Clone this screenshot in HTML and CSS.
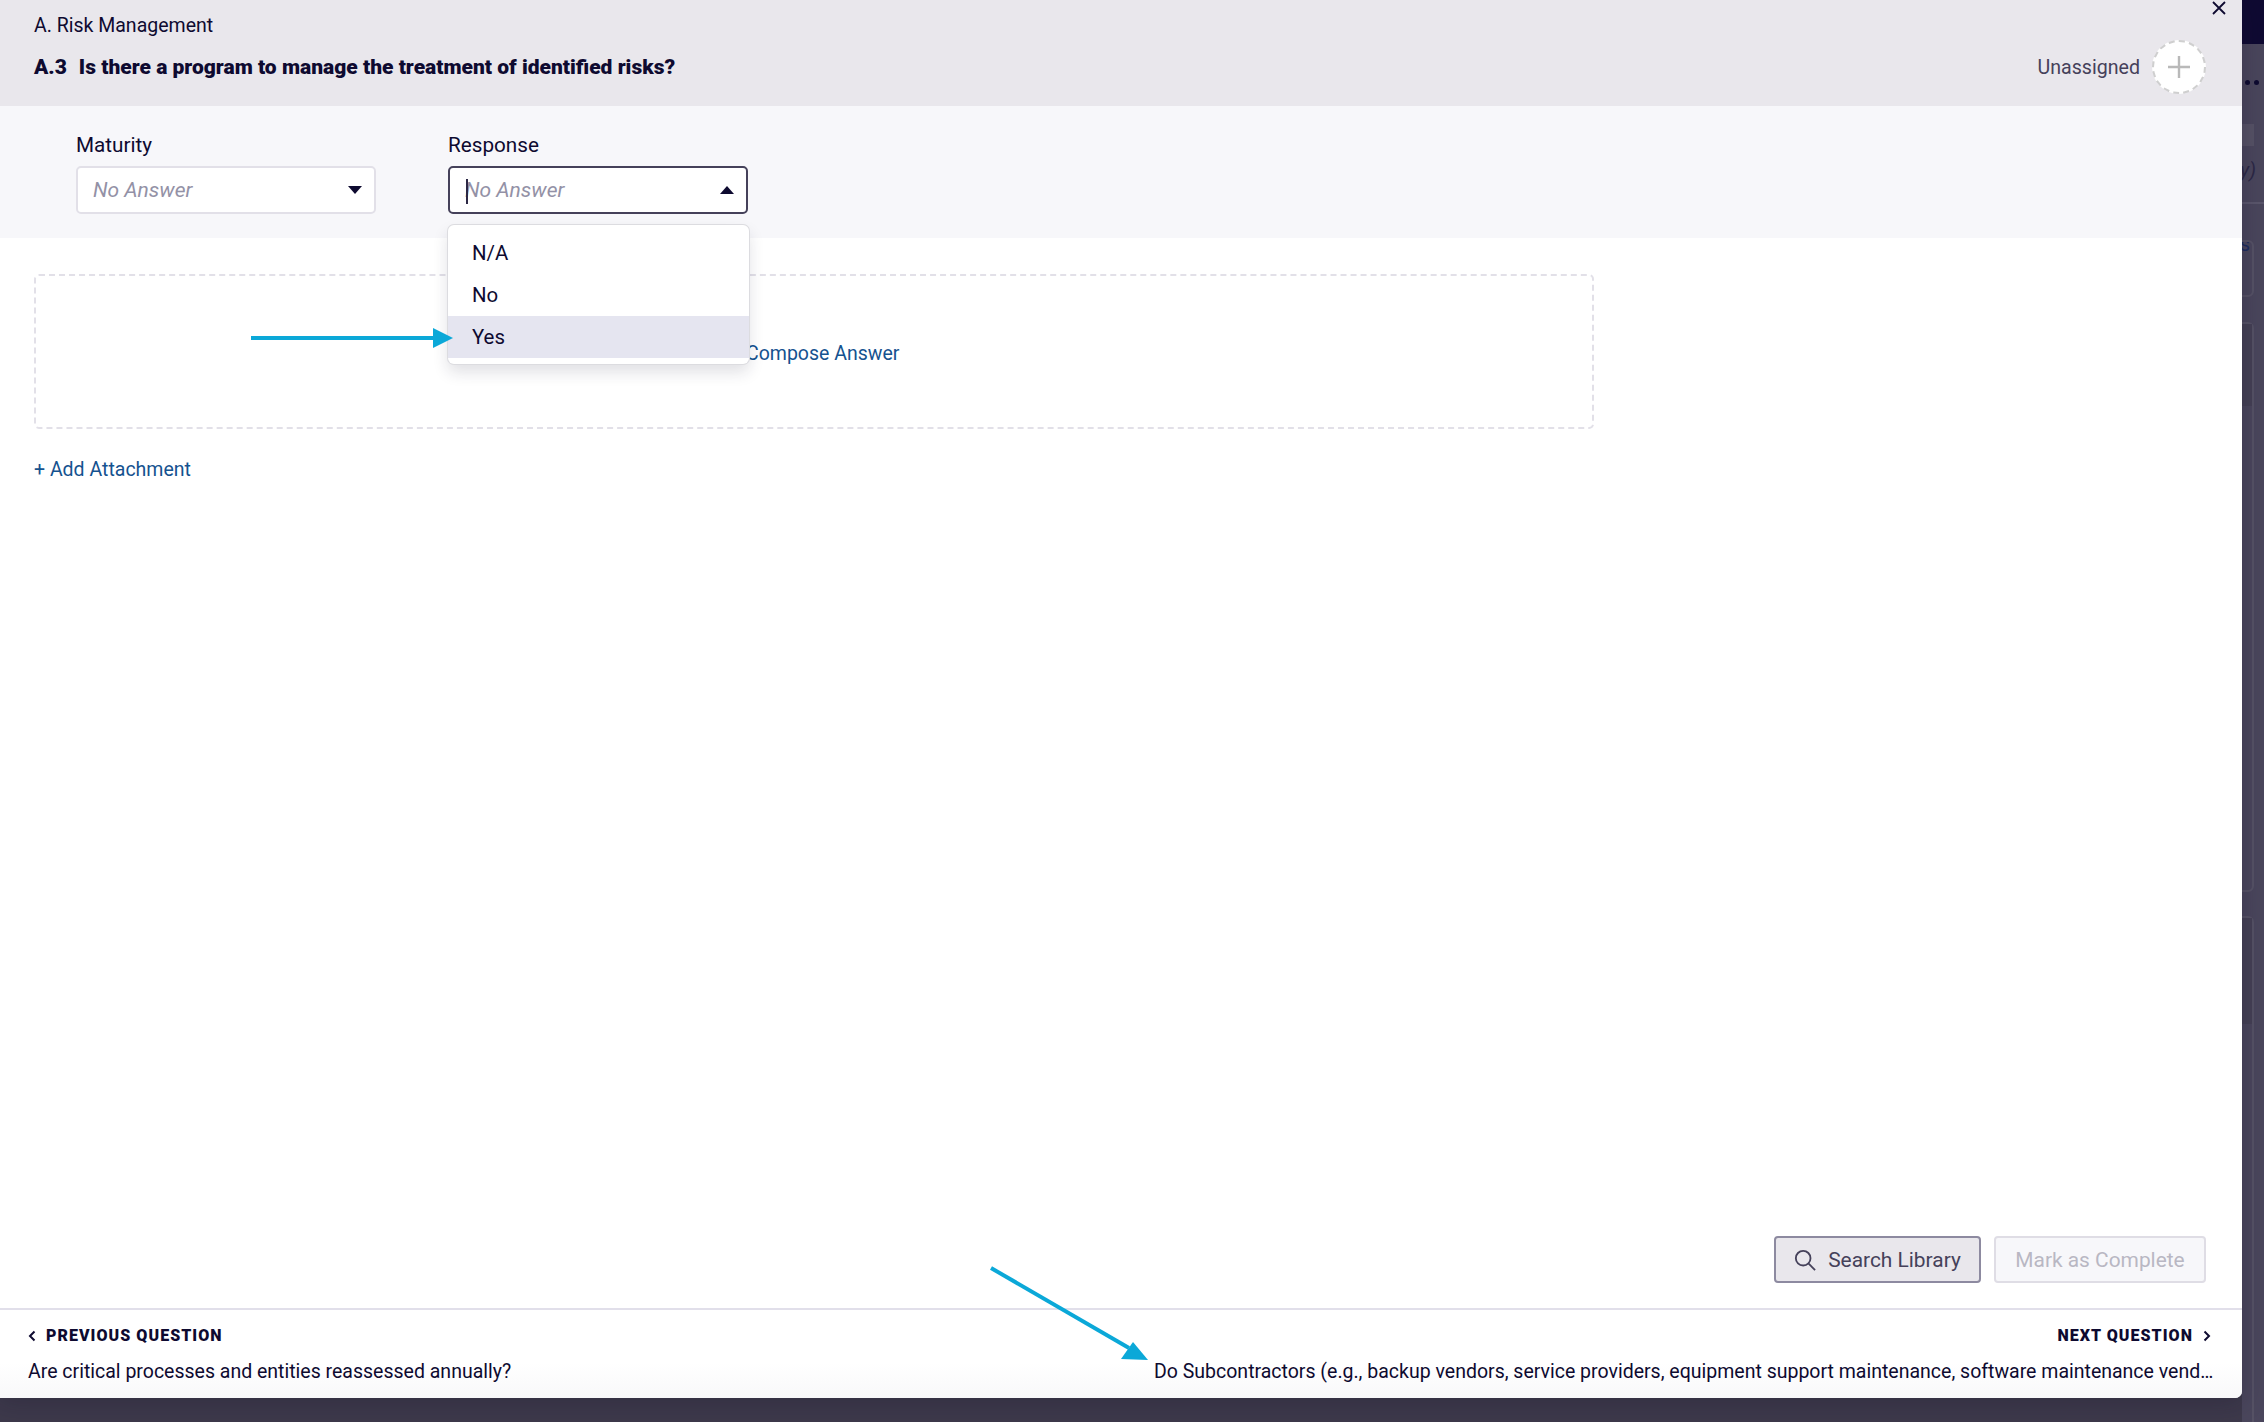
FILE: index.html
```html
<!DOCTYPE html>
<html lang="en">
<head>
<meta charset="utf-8">
<title>A.3 Risk Management</title>
<link rel="stylesheet" href="styles.css">
</head>
<body>
<div class="app">
  <main class="modal">
    <header class="head">
      <div class="head-main">
        <div class="section">A. Risk Management</div>
        <h1 class="question"><span class="qnum">A.3</span>Is there a program to manage the treatment of identified risks?</h1>
      </div>
      <div class="assign">
        <span class="assign-label">Unassigned</span>
        <span class="assign-btn">
          <svg class="assign-plus" viewBox="0 0 22 22"><path d="M11 0v22M0 11h22"/></svg>
        </span>
      </div>
      <svg class="close" viewBox="0 0 14 14"><path d="M1 1l12 12M13 1L1 13"/></svg>
    </header>

    <section class="fields">
      <div class="field">
        <label class="field-label">Maturity</label>
        <div class="select">
          <span class="placeholder">No Answer</span>
          <span class="tri tri-down"></span>
        </div>
      </div>
      <div class="field field-open">
        <label class="field-label">Response</label>
        <div class="select select-focus">
          <span class="caret"></span>
          <span class="placeholder">No Answer</span>
          <span class="tri tri-up"></span>
        </div>
        <ul class="menu">
          <li class="option">N/A</li>
          <li class="option">No</li>
          <li class="option option-active">Yes</li>
        </ul>
      </div>
    </section>

    <section class="body">
      <div class="drop">
        <a class="link compose">Compose Answer</a>
      </div>
      <a class="link attach">+ Add Attachment</a>
      <div class="actions">
        <button class="btn btn-search">
          <svg class="search-icon" viewBox="0 0 24 24"><circle cx="10" cy="10" r="8"/><path d="M16 16l7 7"/></svg>
          Search Library
        </button>
        <button class="btn btn-complete">Mark as Complete</button>
      </div>
    </section>

    <footer class="foot">
      <div class="nav">
        <div class="nav-title">
          <svg class="chev" viewBox="0 0 8 12"><path d="M6.5 1.5L2 6l4.5 4.5"/></svg>
          Previous Question
        </div>
        <div class="nav-text">Are critical processes and entities reassessed annually?</div>
      </div>
      <div class="nav nav-next">
        <div class="nav-title">
          Next Question
          <svg class="chev" viewBox="0 0 8 12"><path d="M1.5 1.5L6 6l-4.5 4.5"/></svg>
        </div>
        <div class="nav-text nav-clip">Do Subcontractors (e.g., backup vendors, service providers, equipment support maintenance, software maintenance vendors, or others) have access to systems?</div>
      </div>
    </footer>

    <svg class="annot annot-a" viewBox="0 0 204 22"><path class="annot-line" d="M0 11h185"/><path class="annot-head" d="M182 1l20 10-20 10z"/></svg>
    <svg class="annot annot-b" viewBox="0 0 160 95"><path class="annot-line" d="M1 1l138 80"/><path class="annot-head" d="M143 75l15 18-27-1z"/></svg>
  </main>

  <aside class="side">
    <div class="side-top"></div>
    <div class="side-dots"><i></i><i></i></div>
    <div class="side-chip"></div>
    <div class="side-paren">y)</div>
    <div class="side-rs">rs</div>
    <div class="side-card side-card-a"></div>
    <div class="side-card side-card-b"><div class="side-card-head"></div></div>
    <div class="side-card side-card-c"><div class="side-card-head"></div></div>
  </aside>
</div>
</body>
</html>
```
FILE: styles.css
```css
* { box-sizing: border-box; }
html, body { margin: 0; padding: 0; }
body {
  width: 2264px;
  height: 1422px;
  overflow: hidden;
  background: #3d394b;
  font-family: Roboto, "Liberation Sans", sans-serif;
  color: #0e0a30;
}
.app { display: flex; align-items: flex-start; width: 2264px; height: 1422px; }

.modal {
  position: relative;
  z-index: 2;
  display: flex;
  flex-direction: column;
  flex: 0 0 2242px;
  height: 1398px;
  background: #fff;
  border-bottom-right-radius: 7px;
  box-shadow: 0 4px 24px rgba(20, 16, 40, .25);
}

/* header */
.head {
  position: relative;
  display: flex;
  justify-content: space-between;
  flex: 0 0 106px;
  background: #e9e7ec;
  padding: 14px 36px 0 34px;
}
.section { font-size: 19.5px; line-height: 24px; }
.question {
  margin: 17px 0 0;
  font-size: 21px;
  line-height: 24px;
  font-weight: 900;
}
.qnum { display: inline-block; margin-right: 12px; }
.assign { display: flex; align-items: center; gap: 12px; height: 54px; margin-top: 26px; }
.assign-label { font-size: 19.6px; color: #45415a; }
.assign-btn {
  display: flex;
  align-items: center;
  justify-content: center;
  width: 54px;
  height: 54px;
  border-radius: 50%;
  background: #fff;
  border: 2px dashed #cfcfcf;
}
.assign-plus { width: 22px; height: 22px; fill: none; stroke: #b9b9b9; stroke-width: 2.4; }
.close {
  position: absolute;
  left: 2212px;
  top: 1px;
  width: 14px;
  height: 14px;
  fill: none;
  stroke: #0e0a30;
  stroke-width: 1.8;
}

/* fields */
.fields {
  display: flex;
  gap: 72px;
  flex: 0 0 132px;
  background: #f7f7fa;
  padding: 27px 0 0 76px;
}
.field { position: relative; width: 300px; }
.field-label { display: block; font-size: 20.7px; line-height: 24px; margin-bottom: 9px; }
.select {
  position: relative;
  display: flex;
  align-items: center;
  justify-content: space-between;
  height: 48px;
  padding: 0 12px 0 15px;
  background: #fff;
  border: 2px solid #e2e0e8;
  border-radius: 5px;
}
.select-focus { border-color: #45415a; }
.placeholder { font-size: 21px; font-style: italic; color: #9391a6; }
.tri { width: 0; height: 0; border-left: 7.5px solid transparent; border-right: 7.5px solid transparent; }
.tri-down { border-top: 8px solid #0e0a30; }
.tri-up { border-bottom: 8px solid #0e0a30; }
.caret {
  position: absolute;
  left: 16px;
  top: 11px;
  width: 2px;
  height: 25px;
  background: #2c2845;
}
.menu {
  position: absolute;
  z-index: 3;
  left: 0;
  top: 92px;
  width: 301px;
  margin: 0;
  padding: 7px 0 6px;
  list-style: none;
  background: #fff;
  border-radius: 6px;
  overflow: hidden;
  box-shadow: 0 0 0 1px #dcdce0, 0 8px 16px rgba(30, 26, 60, .14);
}
.option { height: 42px; line-height: 42px; padding-left: 24px; font-size: 20.4px; }
.option-active { background: #e5e5f0; }

/* body */
.body {
  flex: 1;
  display: flex;
  flex-direction: column;
  padding: 36px 36px 25px 34px;
}
.drop {
  position: relative;
  width: 1560px;
  height: 155px;
  border: 2px dashed #e2e0e8;
  border-radius: 5px;
  display: flex;
  align-items: center;
  padding-left: 710px;
}
.link { color: #15528f; font-size: 19.5px; }
.compose { position: relative; top: 2px; }
.attach { margin-top: 29px; line-height: 24px; }
.actions { margin-top: auto; display: flex; justify-content: flex-end; gap: 13px; }
.btn {
  display: flex;
  align-items: center;
  justify-content: center;
  height: 47px;
  border-radius: 4px;
  font-family: inherit;
  font-size: 20.9px;
  padding: 1px 0 0;
}
.btn-search {
  width: 207px;
  gap: 12px;
  background: #e9e7ec;
  border: 2px solid #8d8aa0;
  color: #45415a;
}
.search-icon { width: 22px; height: 22px; fill: none; stroke: #45415a; stroke-width: 2; }
.btn-complete {
  width: 212px;
  background: #f7f7fa;
  border: 2px solid #dfdde5;
  color: #b9b7c3;
}

/* footer */
.foot {
  display: flex;
  justify-content: space-between;
  flex: 0 0 90px;
  padding: 16px 31px 0 28px;
  border-top: 2px solid #e1dfea;
  background: linear-gradient(to bottom, #fff 60%, #f8f8fa 100%);
  border-bottom-right-radius: 7px;
}
.nav-title {
  display: flex;
  align-items: center;
  gap: 10px;
  font-size: 16px;
  line-height: 20px;
  font-weight: 900;
  letter-spacing: 1.05px;
  text-transform: uppercase;
}
.nav-text { margin-top: 14px; font-size: 19.5px; line-height: 24px; }
.nav-next { display: flex; flex-direction: column; align-items: flex-end; }
.nav-clip {
  width: 1060px;
  margin-right: -3px;
  white-space: nowrap;
  overflow: hidden;
  text-overflow: ellipsis;
}
.chev { width: 8px; height: 12px; fill: none; stroke: #0e0a30; stroke-width: 2; }

/* annotations */
.annot { position: absolute; z-index: 4; overflow: visible; }
.annot-a { left: 251px; top: 327px; width: 204px; height: 22px; }
.annot-b { left: 990px; top: 1267px; width: 160px; height: 95px; }
.annot-line { fill: none; stroke: #0ba8d8; stroke-width: 4; }
.annot-head { fill: #0ba8d8; }

/* page behind the modal */
.side {
  position: relative;
  flex: 0 0 22px;
  height: 1422px;
  overflow: hidden;
  background: #4a465c;
}
.side-top { height: 44px; background: #0f0a32; }
.side-dots { display: flex; gap: 4px; margin: 36px 0 0 3px; height: 8px; }
.side-dots i { width: 5px; height: 5px; border-radius: 50%; background: #0e0a30; }
.side-chip { width: 12px; height: 22px; margin-top: 36px; background: #565265; }
.side-paren { margin: 12px 0 0 -2px; height: 46px; border-bottom: 2px solid #5a566b; font-size: 20px; font-style: italic; color: #2c2845; }
.side-rs { margin: 28px 0 0 -9px; height: 24px; font-size: 20px; line-height: 24px; color: #1d2c5e; }
.side-card {
  position: absolute;
  left: -20px;
  width: 32px;
  border: 2px solid #565265;
  border-radius: 6px;
}
.side-card-a { top: 240px; height: 57px; }
.side-card-b { top: 322px; height: 570px; }
.side-card-c { top: 916px; height: 600px; }
.side-card-head { height: 82px; background: #444054; }
.side-card-c .side-card-head { height: 106px; }
```
